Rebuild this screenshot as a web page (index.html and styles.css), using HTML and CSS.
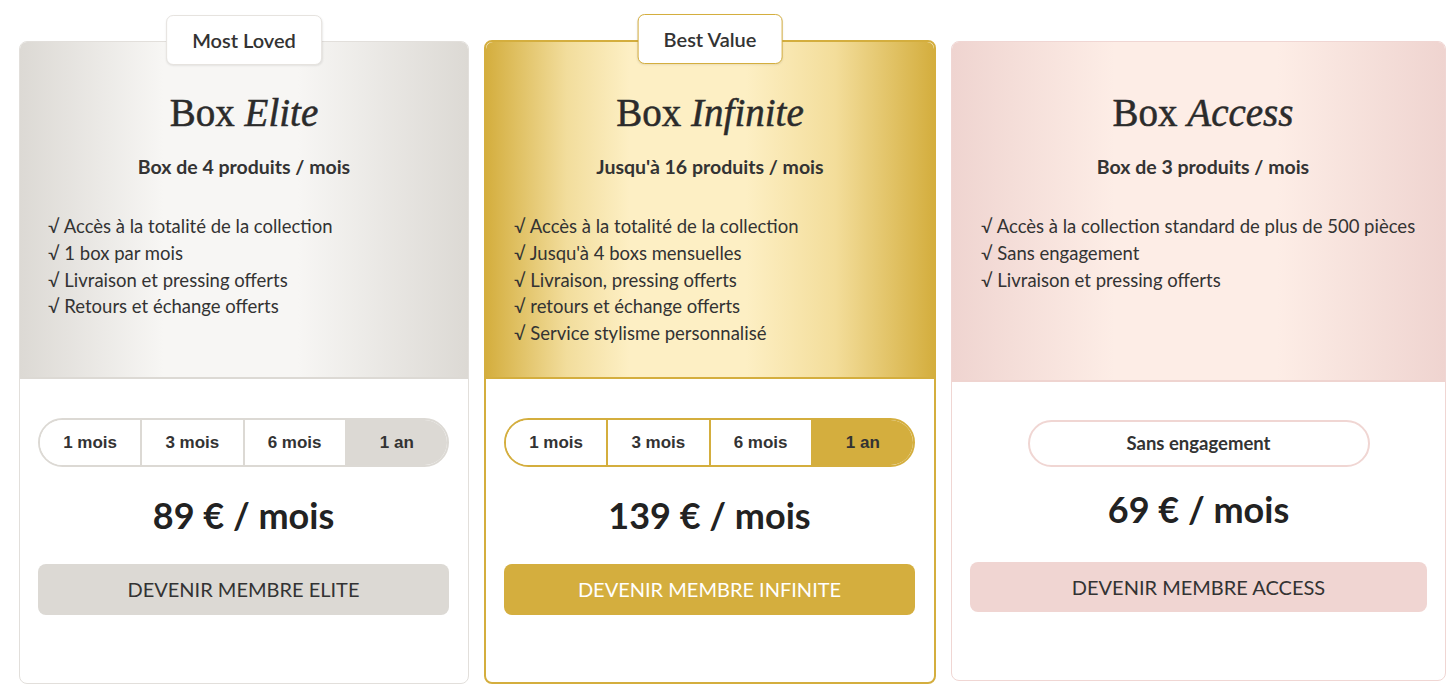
FILE: index.html
```html
<!DOCTYPE html>
<html lang="fr">
<head>
  <meta charset="utf-8">
  <meta name="viewport" content="width=device-width,initial-scale=1">
  <title>Nos Box</title>
  <link rel="stylesheet" href="styles.css">
</head>
<body>
  <main class="plans">
    <article class="plan plan-elite">
      <span class="badge">Most Loved</span>
      <header class="plan-head">
        <h2>Box <em>Elite</em></h2>
        <p class="sub">Box de 4 produits / mois</p>
        <ul class="features">
          <li>Accès à la totalité de la collection</li>
          <li>1 box par mois</li>
          <li>Livraison et pressing offerts</li>
          <li>Retours et échange offerts</li>
        </ul>
      </header>
      <div class="plan-body">
        <div class="durations">
          <button>1 mois</button>
          <button>3 mois</button>
          <button>6 mois</button>
          <button class="active">1 an</button>
        </div>
        <p class="price">89 € / mois</p>
        <a class="cta" href="#">DEVENIR MEMBRE ELITE</a>
      </div>
    </article>

    <article class="plan plan-infinite">
      <span class="badge">Best Value</span>
      <header class="plan-head">
        <h2>Box <em>Infinite</em></h2>
        <p class="sub">Jusqu'à 16 produits / mois</p>
        <ul class="features">
          <li>Accès à la totalité de la collection</li>
          <li>Jusqu'à 4 boxs mensuelles</li>
          <li>Livraison, pressing offerts</li>
          <li>retours et échange offerts</li>
          <li>Service stylisme personnalisé</li>
        </ul>
      </header>
      <div class="plan-body">
        <div class="durations">
          <button>1 mois</button>
          <button>3 mois</button>
          <button>6 mois</button>
          <button class="active">1 an</button>
        </div>
        <p class="price">139 € / mois</p>
        <a class="cta" href="#">DEVENIR MEMBRE INFINITE</a>
      </div>
    </article>

    <article class="plan plan-access">
      <header class="plan-head">
        <h2>Box <em>Access</em></h2>
        <p class="sub">Box de 3 produits / mois</p>
        <ul class="features">
          <li>Accès à la collection standard de plus de 500 pièces</li>
          <li>Sans engagement</li>
          <li>Livraison et pressing offerts</li>
        </ul>
      </header>
      <div class="plan-body">
        <div class="no-commit">Sans engagement</div>
        <p class="price">69 € / mois</p>
        <a class="cta" href="#">DEVENIR MEMBRE ACCESS</a>
      </div>
    </article>
  </main>
</body>
</html>
```

FILE: styles.css
```css
:root {
  --fg: #333;
  --silver: #dcd9d4;
  --silver-light: #f7f6f4;
  --gold: #d4ae3e;
  --gold-light: #fdefc4;
  --rose: #efd4d0;
  --rose-light: #fdede6;
}
* {
  box-sizing: border-box;
  margin: 0;
  padding: 0;
}
body {
  background: #fff;
  color: var(--fg);
  font-family: Lato, "Open Sans", sans-serif;
}
.plans {
  display: grid;
  grid-template-columns: 450px 452px 495px;
  gap: 15px;
  padding: 41px 6px 0 19px;
  align-items: start;
}
.plan {
  position: relative;
  border: 1px solid #e2dfdb;
  border-radius: 8px;
  background: #fff;
}
.badge {
  position: absolute;
  top: -27px;
  left: 50%;
  transform: translateX(-50%);
  height: 50px;
  padding: 0 25px;
  display: flex;
  align-items: center;
  background: #fff;
  border: 1px solid #e6e3df;
  border-radius: 7px;
  box-shadow: 0 1px 2px rgba(0, 0, 0, 0.08);
  font-size: 20px;
  font-weight: 600;
  white-space: nowrap;
  z-index: 1;
}

/* top half */
.plan-head {
  height: 337px;
  padding: 47px 28px 0;
  border-radius: 7px 7px 0 0;
  border-bottom: 2px solid var(--silver);
  background: linear-gradient(90deg, var(--silver) 0%, var(--silver-light) 32%, var(--silver-light) 62%, var(--silver) 100%);
}
.plan-head h2 {
  text-align: center;
  font-family: "Liberation Serif", serif;
  font-weight: normal;
  font-size: 39px;
  line-height: 48px;
  color: #2b2b2b;
  -webkit-text-stroke: 0.5px #2b2b2b;
}
.plan-head h2 em {
  font-style: italic;
}
.sub {
  margin-top: 17px;
  text-align: center;
  font-size: 19.5px;
  font-weight: bold;
  line-height: 25px;
}
.features {
  list-style: none;
  margin-top: 34px;
  font-size: 18.5px;
  line-height: 26.8px;
}
.features li::before {
  content: "\221A\00a0";
}

/* bottom half */
.plan-body {
  padding: 39px 19px 68px 18px;
  text-align: center;
}
.durations {
  display: flex;
  height: 49px;
  border: 2px solid var(--silver);
  border-radius: 25px;
  overflow: hidden;
}
.durations button {
  flex: 1;
  border: none;
  background: #fff;
  font-family: "Liberation Sans", Arial, sans-serif;
  font-weight: bold;
  font-size: 17px;
  color: var(--fg);
  cursor: pointer;
}
.durations button + button {
  border-left: 2px solid var(--silver);
}
.durations button.active {
  background: var(--silver);
}
.price {
  margin-top: 27px;
  font-size: 36px;
  font-weight: bold;
  line-height: 43px;
  color: #222;
}
.cta {
  display: block;
  margin-top: 27px;
  height: 51px;
  line-height: 51px;
  border-radius: 8px;
  background: var(--silver);
  color: var(--fg);
  font-size: 20px;
  text-decoration: none;
}

/* infinite */
.plan-infinite {
  border: 2px solid var(--gold);
  margin-top: -1px;
}
.plan-infinite .badge {
  top: -28px;
  border-color: var(--gold);
}
.plan-infinite .plan-head {
  border-bottom-color: var(--gold);
  background: linear-gradient(90deg, var(--gold) 0%, #f2dd9c 18%, var(--gold-light) 32%, var(--gold-light) 58%, #f3dd9a 78%, var(--gold) 100%);
}
.plan-infinite .plan-body {
  padding-bottom: 67px;
}
.plan-infinite .durations {
  border-color: var(--gold);
}
.plan-infinite .durations button + button {
  border-left-color: var(--gold);
}
.plan-infinite .durations button.active {
  background: var(--gold);
}
.plan-infinite .cta {
  background: var(--gold);
  color: #fff;
}

/* access */
.plan-access {
  border-color: #f0d6d3;
}
.plan-access .plan-head {
  height: 340px;
  padding-left: 29px;
  padding-right: 20px;
  border-bottom-color: var(--rose);
  background: linear-gradient(90deg, var(--rose) 0%, var(--rose-light) 33%, var(--rose-light) 66%, var(--rose) 100%);
}
.plan-access .plan-body {
  padding: 38px 18px 68px;
}
.no-commit {
  width: 342px;
  height: 47px;
  margin: 0 auto;
  line-height: 43px;
  border: 2px solid #f0d6d3;
  border-radius: 24px;
  font-size: 18.5px;
  font-weight: bold;
}
.plan-access .price {
  margin-top: 21px;
}
.plan-access .cta {
  margin-top: 31px;
  height: 50px;
  line-height: 50px;
  background: #f0d5d2;
}
```
